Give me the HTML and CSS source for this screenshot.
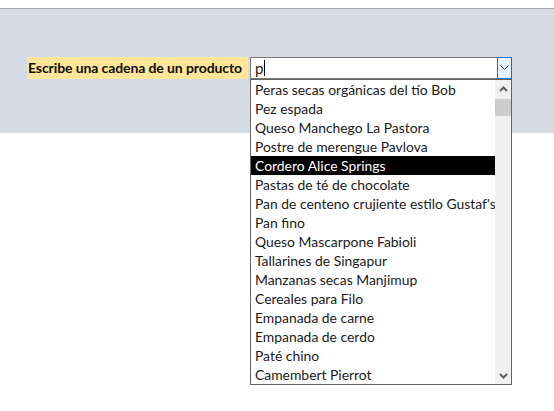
FILE: index.html
```html
<!DOCTYPE html>
<html lang="es">
<head>
<meta charset="utf-8">
<title>Buscar producto</title>
<link rel="stylesheet" href="styles.css">
</head>
<body>
<div class="page">
<div class="topstrip"></div>
<div class="band">
  <div class="row">
    <div class="label">Escribe una cadena de un producto</div>
    <div class="combo">
      <div class="input"><span class="typed">p</span><span class="caret"></span></div>
      <div class="dropbtn">
        <svg width="9" height="6" viewBox="0 0 9 6"><polyline points="0.5,0.5 4.5,4.5 8.5,0.5" fill="none" stroke="#333" stroke-width="1"/></svg>
      </div>
      <div class="list">
        <ul class="items">
          <li>Peras secas orgánicas del tío Bob</li>
          <li>Pez espada</li>
          <li>Queso Manchego La Pastora</li>
          <li>Postre de merengue Pavlova</li>
          <li class="selected">Cordero Alice Springs</li>
          <li>Pastas de té de chocolate</li>
          <li>Pan de centeno crujiente estilo Gustaf's</li>
          <li>Pan fino</li>
          <li>Queso Mascarpone Fabioli</li>
          <li>Tallarines de Singapur</li>
          <li>Manzanas secas Manjimup</li>
          <li>Cereales para Filo</li>
          <li>Empanada de carne</li>
          <li>Empanada de cerdo</li>
          <li>Paté chino</li>
          <li>Camembert Pierrot</li>
        </ul>
        <div class="scrollbar">
          <div class="arrow">
            <svg width="9" height="6" viewBox="0 0 9 6"><polyline points="1,5 4.5,1.5 8,5" fill="none" stroke="#606060" stroke-width="2"/></svg>
          </div>
          <div class="track"><div class="thumb"></div></div>
          <div class="arrow">
            <svg width="9" height="6" viewBox="0 0 9 6"><polyline points="1,1 4.5,4.5 8,1" fill="none" stroke="#606060" stroke-width="2"/></svg>
          </div>
        </div>
      </div>
    </div>
  </div>
</div>
<div class="rest"></div>
</div>
</body>
</html>
```
FILE: styles.css
```css
html, body {
  margin: 0;
  padding: 0;
  background: #ffffff;
}
body {
  font-family: Lato, "Open Sans", "Liberation Sans", sans-serif;
  font-size: 14px;
  color: #000;
}
.page {
  min-height: 411px;
  display: flex;
  flex-direction: column;
}
.topstrip {
  height: 8px;
  background: #ffffff;
  border-bottom: 1px solid #a0a4a8;
}
.band {
  height: 124px;
  background: #d6dce5;
  box-sizing: border-box;
  padding: 48px 0 0 27px;
  position: relative;
  z-index: 1;
}
.rest {
  flex: 1;
  height: 278px;
  background: #ffffff;
}
.row {
  display: flex;
  align-items: flex-start;
}
.label {
  width: 221px;
  height: 22px;
  line-height: 22px;
  background: #ffe699;
  font-weight: bold;
  padding-left: 1px;
  box-sizing: border-box;
  white-space: nowrap;
  color: #0d0d0d;
  letter-spacing: -0.1px;
}
.combo {
  position: relative;
  margin-left: 2px;
  width: 262px;
  height: 22px;
  display: flex;
}
.input {
  flex: 1;
  height: 22px;
  box-sizing: border-box;
  border: 1px solid #7a7a7a;
  border-right: none;
  background: #fff;
  display: flex;
  align-items: center;
  padding-left: 4px;
  font-size: 15px;
}
.typed {
  line-height: 16px;
  color: #1a1a1a;
}
.caret {
  width: 1px;
  height: 16px;
  background: #000;
  margin-left: 1px;
}
.dropbtn {
  width: 15px;
  height: 22px;
  box-sizing: border-box;
  border: 1px solid #0078d7;
  background: #e5f1fb;
  display: flex;
  align-items: center;
  justify-content: center;
}
.list {
  position: absolute;
  left: 0;
  top: 22px;
  width: 262px;
  height: 306px;
  box-sizing: border-box;
  border: 1px solid #646464;
  background: #fff;
  display: flex;
  z-index: 5;
}
.items {
  list-style: none;
  margin: 0;
  padding: 0;
  flex: 1;
  overflow: hidden;
}
.items li {
  height: 19px;
  line-height: 19px;
  padding-left: 4px;
  white-space: nowrap;
  overflow: hidden;
  font-size: 13.9px;
  color: #1a1a1a;
}
.items li.selected {
  background: #000;
  color: #fff;
}
.scrollbar {
  width: 16px;
  background: #f0f0f0;
  display: flex;
  flex-direction: column;
}
.arrow {
  height: 17px;
  display: flex;
  align-items: center;
  justify-content: center;
}
.track {
  flex: 1;
  padding-top: 2px;
}
.thumb {
  height: 17px;
  background: #cdcdcd;
}
```
